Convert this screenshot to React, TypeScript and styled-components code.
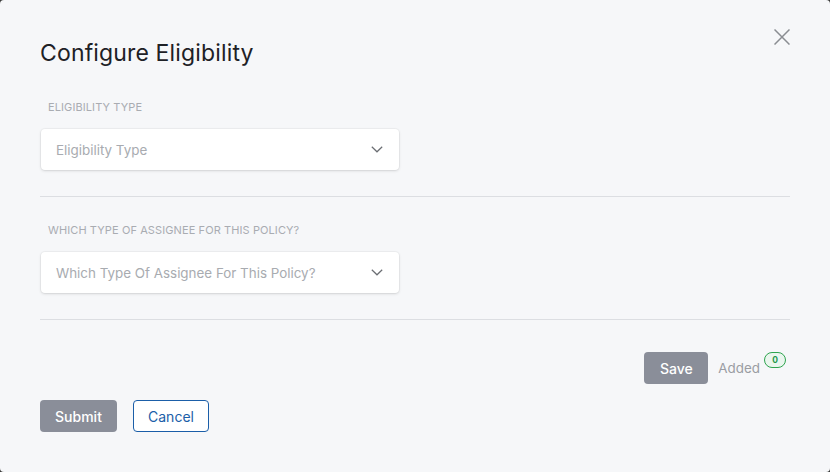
import React from "react";
import styled, { createGlobalStyle } from "styled-components";

const Global = createGlobalStyle`
  html, body { margin: 0; padding: 0; background: #3a3a3a; }
  body { font-family: Inter, "Noto Sans", sans-serif; }
  * { box-sizing: border-box; }
`;

const Modal = styled.div`
  width: 830px;
  height: 472px;
  background: #f6f7f9;
  border-radius: 4px;
  padding: 39px 40px 0 40px;
  position: relative;
  display: flex;
  flex-direction: column;
`;

const Title = styled.h2`
  margin: 0;
  font-size: 23px;
  line-height: 28px;
  font-weight: 400;
  letter-spacing: 0.15px;
  color: #1e2126;
`;

const CloseButton = styled.button`
  position: absolute;
  top: 28px;
  right: 40px;
  width: 17px;
  height: 17px;
  padding: 0;
  border: none;
  background: transparent;
  display: flex;
  align-items: center;
  justify-content: center;
  cursor: pointer;
`;

const Section = styled.div<{ $top: number }>`
  display: flex;
  flex-direction: column;
  margin-top: ${(p) => p.$top}px;
`;

const Label = styled.div`
  font-size: 11px;
  line-height: 14px;
  color: #a9acb2;
  text-transform: uppercase;
  letter-spacing: 0.1px;
  padding-left: 8px;
`;

const SelectBox = styled.div`
  margin-top: 15px;
  margin-left: 1px;
  width: 358px;
  height: 41px;
  background: #ffffff;
  border-radius: 4px;
  box-shadow: 0 1px 3px rgba(0, 0, 0, 0.13), 0 0 0 1px rgba(0, 0, 0, 0.03);
  display: flex;
  align-items: center;
  justify-content: space-between;
  padding: 0 16px 0 15px;
`;

const Placeholder = styled.span`
  font-size: 13.4px;
  color: #a8abb0;
`;

const Divider = styled.hr`
  margin: 26px 0 0 0;
  border: none;
  border-top: 1px solid #dcdee2;
  height: 0;
`;

const SaveRow = styled.div`
  margin-top: 32px;
  margin-right: 4px;
  display: flex;
  justify-content: flex-end;
  align-items: center;
  height: 32px;
`;

const Button = styled.button<{ $variant: "primary" | "outline"; $w: number }>`
  width: ${(p) => p.$w}px;
  height: 32px;
  border-radius: 4px;
  font-family: Inter, "Noto Sans", sans-serif;
  font-size: 14px;
  font-weight: 500;
  padding: 0;
  cursor: pointer;
  ${(p) =>
    p.$variant === "primary"
      ? `background: #8a8e99; color: #ffffff; border: none;`
      : `background: #ffffff; color: #1b5ea8; border: 1px solid #1b5ea8; font-weight: 400;`}
`;

const AddedText = styled.span`
  margin-left: 10px;
  font-size: 13.4px;
  color: #9a9da3;
`;

const Badge = styled.span`
  align-self: flex-start;
  margin-left: 4px;
  width: 22px;
  height: 16px;
  border: 1px solid #2ea44f;
  border-radius: 8px;
  background: #eaf6ee;
  color: #22984a;
  font-size: 8.5px;
  font-weight: 700;
  display: flex;
  align-items: center;
  justify-content: center;
`;

const Footer = styled.div`
  margin-top: 16px;
  display: flex;
  gap: 16px;
`;

const Chevron = () => (
  <svg width="12" height="7" viewBox="0 0 12 7" fill="none">
    <path d="M0.8 0.8 L6 5.8 L11.2 0.8" stroke="#6b6e73" strokeWidth="1.2" />
  </svg>
);

const CloseIcon = () => (
  <svg width="16" height="16" viewBox="0 0 16 16" fill="none">
    <path d="M0.5 0.5 L15.5 15.5 M15.5 0.5 L0.5 15.5" stroke="#8a8d92" strokeWidth="1.5" />
  </svg>
);

const Field = ({ label, top }: { label: string; top: number }) => (
  <Section $top={top}>
    <Label>{label}</Label>
    <SelectBox>
      <Placeholder>{label.toLowerCase().replace(/\b\w/g, (c) => c.toUpperCase())}</Placeholder>
      <Chevron />
    </SelectBox>
  </Section>
);

export default function App() {
  return (
    <>
      <Global />
      <Modal>
        <Title>Configure Eligibility</Title>
        <CloseButton aria-label="Close">
          <CloseIcon />
        </CloseButton>
        <Field label="Eligibility Type" top={33} />
        <Divider />
        <Field label="Which Type Of Assignee For This Policy?" top={26} />
        <Divider />
        <SaveRow>
          <Button $variant="primary" $w={64}>Save</Button>
          <AddedText>Added</AddedText>
          <Badge>0</Badge>
        </SaveRow>
        <Footer>
          <Button $variant="primary" $w={77}>Submit</Button>
          <Button $variant="outline" $w={76}>Cancel</Button>
        </Footer>
      </Modal>
    </>
  );
}
